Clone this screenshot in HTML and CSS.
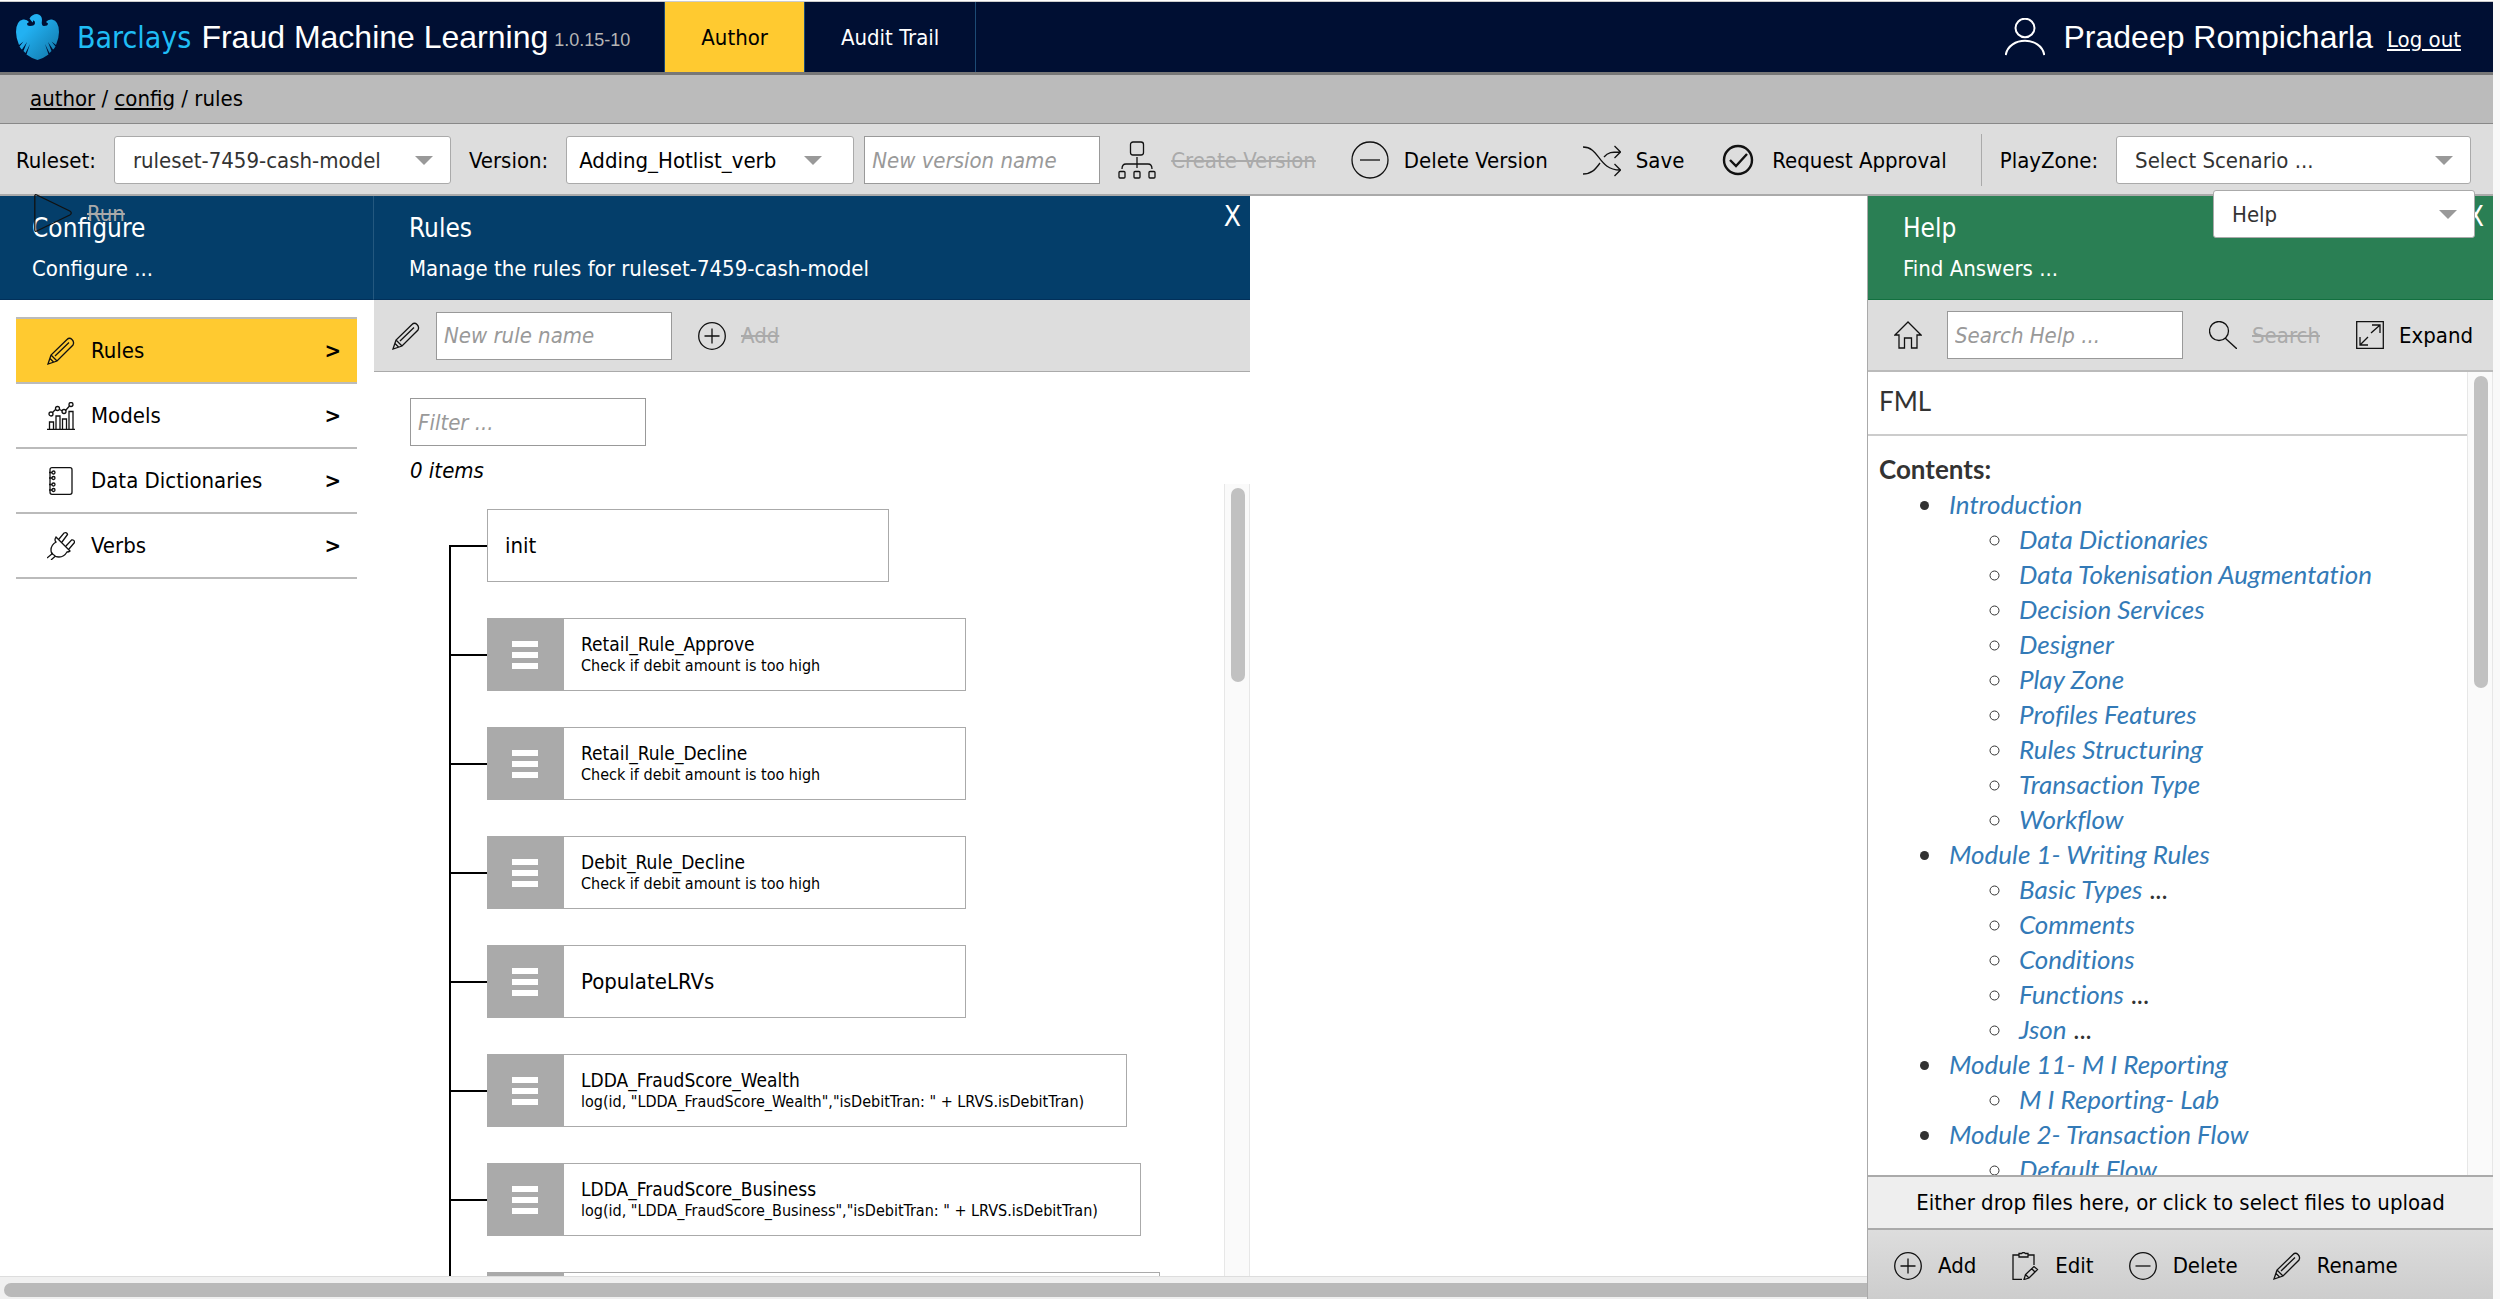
FILE: index.html
```html
<!DOCTYPE html>
<html lang="en">
<head>
    <meta charset="UTF-8">
    <meta name="viewport" content="width=device-width, initial-scale=1.0">
    <title>Barclays Fraud Machine Learning</title>
    <link rel="stylesheet" href="styles.css">
</head>
<body>
    <!-- Shared icons -->
    <svg class="sprite" aria-hidden="true">
        <symbol id="pencil" viewBox="0 0 28 28">
            <path d="M1 27l3-9L20 2.500q2.500-2.500 5 0t1 5.500L10 24zM4 18l6 6M8 19L22 5.500M3 21.500l3.500 3.500"/>
        </symbol>
        <symbol id="plus" viewBox="0 0 28 28">
            <circle cx="14" cy="14" r="13.300"/>
            <path d="M6.500 14h15M14 6.500v15"/>
        </symbol>
        <symbol id="minus" viewBox="0 0 28 28">
            <circle cx="14" cy="14" r="13.300"/>
            <path d="M6.500 14h15"/>
        </symbol>
    </svg>

    <header class="topbar">
        <div class="brand">
            <svg class="logo" viewBox="0 0 43 46">
                <defs>
                    <linearGradient id="eagle" x1="0" y1="0" x2="1" y2="1">
                        <stop offset="0.3" stop-color="#22b1f2"/>
                        <stop offset="1" stop-color="#1073a4"/>
                    </linearGradient>
                </defs>
                <path fill="url(#eagle)" d="M13.500 4.500Q16 0 21 0Q26 1 26 6Q25 12 28 12Q32 12 32 9.500L30 8Q32 5 36 5.500Q43 7 43 18Q43 24 40 31L35.500 27.500L39.500 32.500Q38 35 37 35.500L32 28L35.500 37L33.500 39L29 30L32.500 40.500Q28 44 21.500 46Q15 44 10.500 40.500L14 30L9.500 39L7.500 37L11 28L6 35.500Q5 35 3.500 32.500L7.500 27.500L3 31Q0 24 0 18Q0 7 7 5.500Q11 5 13 8L11 9.500Q11 12 14 12Q19 12 19 9Q19 6 17 6.500L17 8.500Q15 7 13.500 4.500Z"/>
            </svg>
            <span class="brand-name">Barclays</span>
            <span class="app-name">Fraud Machine Learning</span>
            <span class="version">1.0.15-10</span>
        </div>
        <nav class="tabs">
            <a class="tab active" href="#author">Author</a>
            <a class="tab" href="#audit">Audit Trail</a>
        </nav>
        <div class="user">
            <svg class="user-icon" viewBox="0 0 40 38">
                <ellipse cx="20" cy="10" rx="9.500" ry="9.300"/>
                <path d="M.7 37C4 18 36 18 39.300 37"/>
            </svg>
            <span class="user-name">Pradeep Rompicharla</span>
            <a class="logout" href="#logout">Log out</a>
        </div>
    </header>

    <nav class="crumbs"><a href="#author">author</a> / <a href="#config">config</a> / rules</nav>

    <div class="toolbar main-toolbar">
        <label for="ruleset">Ruleset:</label>
        <div class="select ruleset">
            <select id="ruleset"><option>ruleset-7459-cash-model</option></select>
        </div>
        <label for="version">Version:</label>
        <div class="select version-select">
            <select id="version"><option>Adding_Hotlist_verb</option></select>
        </div>
        <input class="new-version" type="text" placeholder="New version name" aria-label="New version name">
        <div class="actions">
            <button class="btn" disabled>
                <svg class="icon-lg" viewBox="0 0 38 38">
                    <rect x="12.500" y="1" width="13" height="13" rx="2.500"/>
                    <rect x="1" y="30.500" width="6" height="6.500" rx="1"/>
                    <rect x="16" y="30.500" width="6" height="6.500" rx="1"/>
                    <rect x="31" y="30.500" width="6" height="6.500" rx="1"/>
                    <path d="M19 16v11M4 28q0-5 4-5h22q4 0 4 5"/>
                </svg>
                <span>Create Version</span>
            </button>
            <button class="btn">
                <svg class="icon-lg" viewBox="0 0 38 38"><circle cx="19" cy="19" r="18"/><path d="M9 19h20"/></svg>
                <span>Delete Version</span>
            </button>
            <button class="btn">
                <svg class="icon-lg" viewBox="0 0 38 38">
                    <path d="M0 6c17 0 15 23 37 23M0 33c8 0 12-4 17-11M21 16c4-5 8-5 16-5M31.500 5l6 6-6 6M31.500 23l6 6-6 6"/>
                </svg>
                <span>Save</span>
            </button>
            <button class="btn">
                <svg class="icon-lg bold" viewBox="0 0 38 38">
                    <circle cx="19" cy="19" r="14"/>
                    <path d="M11 19l6 6 11-12"/>
                </svg>
                <span>Request Approval</span>
            </button>
        </div>
        <span class="divider"></span>
        <label for="scenario">PlayZone:</label>
        <div class="select scenario">
            <select id="scenario"><option>Select Scenario ...</option></select>
        </div>

        <!-- These two hang over the panel headers below -->
        <button class="btn run" disabled>
            <svg class="icon-lg" viewBox="0 0 38 38"><path d="M.8 2q0-2 2-1l33 16q3 2 0 4l-33 16q-2 1-2-1z"/></svg>
            <span>Run</span>
        </button>
        <div class="select help-select">
            <select aria-label="Help menu"><option>Help</option></select>
        </div>
    </div>

    <main class="workspace">
        <div class="canvas">
            <div class="panels">
                <section class="configure">
                    <div class="panel-head">
                        <h2>Configure</h2>
                        <p>Configure ...</p>
                    </div>
                    <nav class="menu">
                        <a class="menu-item active" href="#rules">
                            <svg class="icon"><use href="#pencil"/></svg>
                            <span>Rules</span><b>&gt;</b>
                        </a>
                        <a class="menu-item" href="#models">
                            <svg class="icon" viewBox="0 0 28 28">
                                <path d="M0 27.500h28M2.500 27v-7h4v7M9 27V14h4v13M15.500 27V17h4v10M22 27V9.500h4V27M5.500 10.500l3-3M12.500 7.500l3 1.500M18.500 8.500l4-4.500"/>
                                <circle cx="4" cy="12" r="2"/><circle cx="10.500" cy="6.500" r="2"/><circle cx="17" cy="9.500" r="2"/><circle cx="24" cy="2.500" r="2"/>
                            </svg>
                            <span>Models</span><b>&gt;</b>
                        </a>
                        <a class="menu-item" href="#dictionaries">
                            <svg class="icon" viewBox="0 0 28 28">
                                <rect x="3" y="0.700" width="22" height="26.600" rx="2"/>
                                <circle cx="6.500" cy="5.500" r="1.500"/><circle cx="6.500" cy="11" r="1.500"/><circle cx="6.500" cy="17.500" r="1.500"/><circle cx="6.500" cy="23" r="1.500"/>
                                <path d="M2 5.500h3M2 11h3M2 17.500h3M2 23h3"/>
                            </svg>
                            <span>Data Dictionaries</span><b>&gt;</b>
                        </a>
                        <a class="menu-item" href="#verbs">
                            <svg class="icon" viewBox="0 0 28 28">
                                <path d="M9 5l14 14q-1 1-3 1q-3 5-8 5q-4 0-5-2q-3-1-3-5q0-5 5-8q-2-2 0-5zM12 7l5-6q3-1 3.500 1.500L15 10M19 14l5.500-6q3-.5 3 2.500L22 17M6 21l-6 5M8.500 24L4 28"/>
                            </svg>
                            <span>Verbs</span><b>&gt;</b>
                        </a>
                    </nav>
                </section>

                <section class="rules">
                    <div class="panel-head">
                        <h2>Rules</h2>
                        <p>Manage the rules for ruleset-7459-cash-model</p>
                        <button class="close" aria-label="Close rules">X</button>
                    </div>
                    <div class="toolbar rules-toolbar">
                        <svg class="icon"><use href="#pencil"/></svg>
                        <input type="text" placeholder="New rule name" aria-label="New rule name">
                        <button class="btn" disabled>
                            <svg class="icon"><use href="#plus"/></svg>
                            <span>Add</span>
                        </button>
                    </div>
                    <div class="filter">
                        <input type="text" placeholder="Filter ..." aria-label="Filter rules">
                        <p>0 items</p>
                    </div>
                    <div class="tree-area">
                        <ul class="tree">
                            <li class="rule root"><div class="rule-text big">init</div></li>
                            <li class="rule">
                                <span class="handle"><i></i><i></i><i></i></span>
                                <div class="rule-text">Retail_Rule_Approve<small>Check if debit amount is too high</small></div>
                            </li>
                            <li class="rule">
                                <span class="handle"><i></i><i></i><i></i></span>
                                <div class="rule-text">Retail_Rule_Decline<small>Check if debit amount is too high</small></div>
                            </li>
                            <li class="rule">
                                <span class="handle"><i></i><i></i><i></i></span>
                                <div class="rule-text">Debit_Rule_Decline<small>Check if debit amount is too high</small></div>
                            </li>
                            <li class="rule">
                                <span class="handle"><i></i><i></i><i></i></span>
                                <div class="rule-text big">PopulateLRVs</div>
                            </li>
                            <li class="rule">
                                <span class="handle"><i></i><i></i><i></i></span>
                                <div class="rule-text">LDDA_FraudScore_Wealth<small>log(id, "LDDA_FraudScore_Wealth","isDebitTran: " + LRVS.isDebitTran)</small></div>
                            </li>
                            <li class="rule">
                                <span class="handle"><i></i><i></i><i></i></span>
                                <div class="rule-text">LDDA_FraudScore_Business<small>log(id, "LDDA_FraudScore_Business","isDebitTran: " + LRVS.isDebitTran)</small></div>
                            </li>
                            <li class="rule next">
                                <span class="handle"></span>
                                <div class="rule-text"></div>
                            </li>
                        </ul>
                        <div class="scroll"><div class="thumb rules-thumb"></div></div>
                    </div>
                </section>
            </div>
            <div class="scroll-x"><div class="thumb-x"></div></div>
        </div>

        <aside class="help">
            <div class="panel-head">
                <h2>Help</h2>
                <p>Find Answers ...</p>
                <button class="close" aria-label="Close help">X</button>
            </div>
            <div class="toolbar help-toolbar">
                <svg class="icon" viewBox="0 0 28 28"><path d="M14 1L1 14h4v13h5.500V17h7v10H23V14h4z"/></svg>
                <input type="text" placeholder="Search Help ..." aria-label="Search Help">
                <button class="btn" disabled>
                    <svg class="icon" viewBox="0 0 28 28"><circle cx="10" cy="10" r="9.500"/><path d="M16 17l12 11"/></svg>
                    <span>Search</span>
                </button>
                <button class="btn">
                    <svg class="icon" viewBox="0 0 28 28"><path d="M.7.7h26.600v26.600H.7zM15 12L23.500 4.500M16 4h8v8M12 16L4 24M4 16v8h8"/></svg>
                    <span>Expand</span>
                </button>
            </div>
            <div class="help-area">
                <div class="help-body">
                    <p class="help-title">FML</p>
                    <p class="contents">Contents:</p>
                    <ul>
                        <li><a href="#">Introduction</a>
                            <ul>
                                <li><a href="#">Data Dictionaries</a></li>
                                <li><a href="#">Data Tokenisation Augmentation</a></li>
                                <li><a href="#">Decision Services</a></li>
                                <li><a href="#">Designer</a></li>
                                <li><a href="#">Play Zone</a></li>
                                <li><a href="#">Profiles Features</a></li>
                                <li><a href="#">Rules Structuring</a></li>
                                <li><a href="#">Transaction Type</a></li>
                                <li><a href="#">Workflow</a></li>
                            </ul>
                        </li>
                        <li><a href="#">Module 1- Writing Rules</a>
                            <ul>
                                <li><a href="#">Basic Types</a> ...</li>
                                <li><a href="#">Comments</a></li>
                                <li><a href="#">Conditions</a></li>
                                <li><a href="#">Functions</a> ...</li>
                                <li><a href="#">Json</a> ...</li>
                            </ul>
                        </li>
                        <li><a href="#">Module 11- M I Reporting</a>
                            <ul>
                                <li><a href="#">M I Reporting- Lab</a></li>
                            </ul>
                        </li>
                        <li><a href="#">Module 2- Transaction Flow</a>
                            <ul>
                                <li><a href="#">Default Flow</a></li>
                            </ul>
                        </li>
                    </ul>
                </div>
                <div class="scroll"><div class="thumb help-thumb"></div></div>
            </div>
            <button class="dropzone">Either drop files here, or click to select files to upload</button>
            <div class="toolbar help-actions">
                <button class="btn">
                    <svg class="icon"><use href="#plus"/></svg>
                    <span>Add</span>
                </button>
                <button class="btn">
                    <svg class="icon" viewBox="0 0 28 28">
                        <path d="M8 3H2v24.300h9M17 3h6v10M8 1.500h2.500q2-2 4 0H17V5H8zM13 27.500l1.500-5L23 14.500l3.500 3L18 26zM14.500 22.500L18 26M20.500 16.500l3.500 3.500"/>
                    </svg>
                    <span>Edit</span>
                </button>
                <button class="btn">
                    <svg class="icon"><use href="#minus"/></svg>
                    <span>Delete</span>
                </button>
                <button class="btn">
                    <svg class="icon"><use href="#pencil"/></svg>
                    <span>Rename</span>
                </button>
            </div>
        </aside>
    </main>
</body>
</html>
```
FILE: styles.css
```css
* {
    box-sizing: border-box;
}

body {
    display: flex;
    flex-direction: column;
    height: 100vh;
    margin: 0;
    padding-top: 1px;
    border-right: 7px solid #f9f9f9;
    overflow: hidden;
    font-family: "DejaVu Sans Condensed", "DejaVu Sans", sans-serif;
    font-size: 22px;
    color: #000;
    background: #fff;
}

h2, p, ul {
    margin: 0;
    padding: 0;
}

h2 {
    font-weight: normal;
}

button, input, select {
    font: inherit;
    color: inherit;
}

svg {
    flex: none;
    fill: none;
    stroke: #111;
    stroke-width: 1.3;
}

.sprite {
    position: absolute;
    width: 0;
    height: 0;
}

.icon {
    width: 28px;
    height: 28px;
}

.icon-lg {
    width: 38px;
    height: 38px;
}

.icon-lg.bold {
    stroke-width: 2.4;
}

/* Top bar */
.topbar {
    display: flex;
    flex: none;
    height: 74px;
    border-top: 1px solid #ccc;
    border-bottom: 3px solid #777;
    background: #000f33;
    color: #fff;
}

.brand {
    display: flex;
    align-items: center;
    padding: 0 34px 0 16px;
    font-family: "Liberation Sans", Arial, sans-serif;
    font-size: 32px;
}

.logo {
    width: 43px;
    height: 46px;
    margin-right: 18px;
    stroke: none;
}

.brand-name {
    margin-right: 10px;
    font-family: "DejaVu Sans Condensed", "DejaVu Sans", sans-serif;
    font-size: 30px;
    color: #1fbdf5;
}

.version {
    margin: 6px 0 0 6px;
    font-size: 18px;
    color: #b5b5b5;
}

.tabs {
    display: flex;
    border-left: 1px solid #1c4a75;
}

.tab {
    display: flex;
    align-items: center;
    padding: 0 36px;
    border-right: 1px solid #1c4a75;
    color: #fff;
    text-decoration: none;
}

.tab.active {
    background: #ffca30;
    color: #000;
}

.user {
    display: flex;
    align-items: center;
    margin-left: auto;
    padding-right: 32px;
}

.user-icon {
    width: 40px;
    height: 38px;
    margin-right: 18px;
    stroke: #fff;
    stroke-width: 2;
}

.user-name {
    margin-right: 14px;
    font-family: "Liberation Sans", Arial, sans-serif;
    font-size: 32px;
}

.logout {
    padding-top: 4px;
    color: #fff;
}

.crumbs {
    flex: none;
    height: 49px;
    padding-left: 30px;
    border-bottom: 1px solid #888;
    background: #bbb;
    line-height: 48px;
}

.crumbs a {
    color: #000;
}

/* Toolbars and controls */
.toolbar {
    display: flex;
    flex: none;
    align-items: center;
    background: #ddd;
}

.main-toolbar {
    position: relative;
    z-index: 1;
    gap: 18px;
    height: 72px;
    padding: 2px 22px 0 16px;
    border-bottom: 2px solid #aaa;
}

.select {
    position: relative;
    height: 48px;
}

.select::after {
    content: "";
    position: absolute;
    top: 20px;
    right: 18px;
    border: 9px solid transparent;
    border-top-color: #999;
    border-bottom: 0;
    pointer-events: none;
}

.select select {
    width: 100%;
    height: 100%;
    padding: 0 40px 0 18px;
    appearance: none;
    border: 1px solid #aaa;
    border-radius: 3px;
    background: #fff;
    color: #333;
}

.ruleset {
    width: 337px;
}

.version-select {
    width: 288px;
}

.version-select select {
    padding-left: 12px;
    color: #000;
}

.version-select::after {
    right: 32px;
}

.scenario {
    flex: 1;
}

input {
    width: 236px;
    height: 48px;
    padding: 0 7px;
    border: 1px solid #999;
    background: #fff;
}

input::placeholder {
    color: #999;
    font-style: italic;
}

.new-version {
    margin-left: -8px;
}

.actions {
    display: flex;
    gap: 35px;
}

.btn {
    display: flex;
    align-items: center;
    gap: 15px;
    padding: 0;
    border: 0;
    background: none;
    white-space: nowrap;
}

.btn:disabled {
    color: #aaa;
    text-decoration: line-through;
}

.divider {
    width: 1px;
    height: 52px;
    margin-left: 16px;
    background: #aaa;
}

.run {
    position: absolute;
    top: 70px;
    left: 34px;
}

.help-select {
    position: absolute;
    top: 66px;
    right: 18px;
    width: 262px;
}

/* Workspace */
.workspace {
    display: flex;
    flex: 1;
    min-height: 0;
}

.canvas {
    display: flex;
    flex: 1;
    flex-direction: column;
    min-width: 0;
}

.panels {
    display: flex;
    flex: 1;
    min-height: 0;
}

.panel-head {
    position: relative;
    flex: none;
    height: 104px;
    padding: 16px 35px 0;
    border-bottom: 1px solid #02305a;
    background: #043e6a;
    color: #fff;
}

.panel-head h2 {
    margin-bottom: 10px;
    font-size: 26px;
    line-height: 32px;
}

.panel-head p {
    line-height: 30px;
}

.close {
    position: absolute;
    top: 4px;
    right: 9px;
    padding: 0;
    border: 0;
    background: none;
    font-size: 28px;
}

.configure {
    width: 374px;
}

.configure .panel-head {
    padding-left: 32px;
    border-right: 1px solid #24587f;
}

.menu {
    margin: 17px 17px 0 16px;
    border-top: 2px solid #bbb;
}

.menu-item {
    display: flex;
    align-items: center;
    gap: 16px;
    height: 65px;
    padding: 0 16px 0 31px;
    border-bottom: 2px solid #bbb;
    color: #000;
    text-decoration: none;
}

.menu-item.active {
    background: #ffca30;
}

.menu-item b {
    margin-left: auto;
}

.rules {
    display: flex;
    flex-direction: column;
    width: 876px;
}

.rules-toolbar {
    gap: 16px;
    height: 72px;
    padding-left: 18px;
    border-bottom: 1px solid #aaa;
}

.rules-toolbar .btn {
    margin-left: 10px;
}

.filter {
    padding: 26px 36px 0;
}

.filter p {
    line-height: 50px;
    font-style: italic;
}

.filter input {
    display: block;
}

.tree-area {
    display: flex;
    flex: 1;
    min-height: 0;
    margin-top: -12px;
    overflow: hidden;
}

.tree {
    position: relative;
    flex: 1;
    align-self: flex-start;
    padding: 25px 0 0 113px;
    list-style: none;
}

/* Trunk and branches joining the rules */
.tree::before {
    content: "";
    position: absolute;
    top: 61px;
    bottom: 0;
    left: 75px;
    width: 2px;
    background: #000;
}

.rule {
    position: relative;
    display: flex;
    width: fit-content;
    min-width: 479px;
    height: 73px;
    margin-bottom: 36px;
}

.rule::before {
    content: "";
    position: absolute;
    top: 36px;
    left: -38px;
    width: 38px;
    height: 2px;
    background: #000;
}

.root {
    min-width: 402px;
}

.next {
    min-width: 673px;
}

.handle {
    display: flex;
    flex-direction: column;
    align-items: center;
    justify-content: center;
    gap: 5px;
    width: 76px;
    background: #aaa;
}

.handle i {
    width: 26px;
    height: 6px;
    background: #fff;
}

.rule-text {
    display: flex;
    flex: 1;
    flex-direction: column;
    justify-content: center;
    padding: 0 42px 0 17px;
    border: 1px solid #aaa;
    background: #fff;
    font-size: 19px;
    line-height: 22px;
}

.rule-text.big {
    font-size: 22px;
}

.rule-text small {
    font-size: 16px;
}

/* Scroll bars */
.scroll {
    width: 26px;
    padding-top: 4px;
    border-left: 1px solid #e7e7e7;
    border-right: 1px solid #e7e7e7;
    background: #fafafa;
}

.thumb {
    width: 14px;
    margin-left: 6px;
    border-radius: 7px;
    background: #c1c1c1;
}

.rules-thumb {
    height: 194px;
}

.help-thumb {
    height: 312px;
}

.scroll-x {
    flex: none;
    height: 23px;
    padding: 6px 0 0 4px;
    border-top: 1px solid #ddd;
    background: #f0f0f0;
}

.thumb-x {
    height: 14px;
    border-radius: 7px 0 0 7px;
    background: #b9b9b9;
}

/* Help */
.help {
    display: flex;
    flex-direction: column;
    width: 626px;
    border-left: 1px solid #aaa;
}

.help .panel-head {
    border-color: #12703f;
    background: #2a7f54;
}

.help-toolbar {
    height: 72px;
    padding-left: 26px;
    border-bottom: 2px solid #bbb;
}

.help-toolbar input {
    width: 236px;
    margin: 0 26px 0 25px;
}

.help-toolbar .btn + .btn {
    margin-left: 36px;
}

.help-area {
    display: flex;
    flex: 1;
    min-height: 0;
}

.help-body {
    flex: 1;
    overflow: hidden;
    color: #333;
    font-family: Lato, sans-serif;
    font-size: 26px;
    font-variant-ligatures: none;
    line-height: 35px;
}

.help-title {
    padding: 12px 11px 15px;
    border-bottom: 2px solid #ccc;
}

.contents {
    padding: 16px 11px 0;
    font-weight: bold;
}

.help-body ul {
    padding-left: 65px;
}

.help-body > ul {
    margin-left: 11px;
}

.help-body li {
    padding-left: 5px;
}

.help-body a {
    color: #337ab7;
    font-style: italic;
    text-decoration: none;
}

.dropzone {
    flex: none;
    height: 55px;
    padding: 0;
    border: 0;
    border-top: 2px solid #aaa;
    border-bottom: 2px solid #aaa;
    background: #eee;
}

.help-actions {
    gap: 35px;
    height: 69px;
    padding: 2px 0 0 26px;
    background: linear-gradient(#ddd, #cdcdcd);
}

.help-actions .btn {
    gap: 16px;
}
```
